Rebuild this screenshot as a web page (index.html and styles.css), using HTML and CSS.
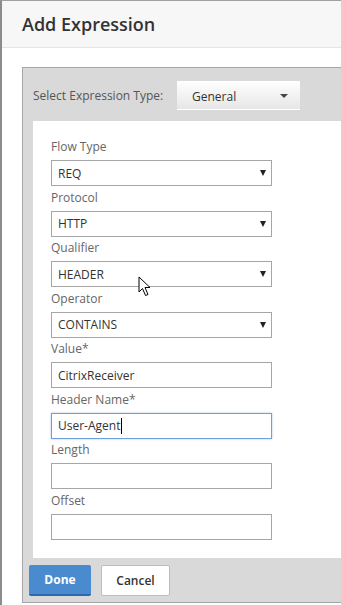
FILE: index.html
```html
<!DOCTYPE html>
<html lang="en">
<head>
    <meta charset="UTF-8">
    <meta name="viewport" content="width=device-width, initial-scale=1.0">
    <title>Add Expression</title>
    <link rel="stylesheet" href="styles.css">
</head>
<body>
    <div class="window">
        <div class="header">
            <p class="title">Add Expression</p>
        </div>

        <div class="content">
            <div class="panel">
                <div class="type-row">
                    <span class="type-label">Select Expression Type:</span>
                    <div class="type-select">
                        <span>General</span>
                        <span class="caret"></span>
                    </div>
                </div>

                <div class="form">
                    <label class="field-label">Flow Type</label>
                    <div class="select"><span>REQ</span><span class="arrow"></span></div>

                    <label class="field-label">Protocol</label>
                    <div class="select"><span>HTTP</span><span class="arrow"></span></div>

                    <label class="field-label">Qualifier</label>
                    <div class="select"><span>HEADER</span><span class="arrow"></span></div>

                    <label class="field-label">Operator</label>
                    <div class="select"><span>CONTAINS</span><span class="arrow"></span></div>

                    <label class="field-label">Value*</label>
                    <div class="input"><span>CitrixReceiver</span></div>

                    <label class="field-label">Header Name*</label>
                    <div class="input focused"><span>User-Agent</span><span class="text-cursor"></span></div>

                    <label class="field-label">Length</label>
                    <div class="input"></div>

                    <label class="field-label">Offset</label>
                    <div class="input"></div>
                </div>

                <div class="footer">
                    <button class="btn btn-done">Done</button>
                    <button class="btn btn-cancel">Cancel</button>
                </div>
            </div>
        </div>

        <!-- mouse pointer over the Qualifier select -->
        <svg class="pointer" width="14" height="22" viewBox="0 0 14 22">
            <path d="M1 1 L1 16 L4.5 12.5 L7.5 19.5 L10 18.5 L7 11.5 L12 11.5 Z" fill="#fff" stroke="#000" stroke-width="1" stroke-linejoin="round"/>
        </svg>
    </div>
</body>
</html>
```

FILE: styles.css
```css
* {
    font-family: "Open Sans", "Noto Sans", sans-serif;
    box-sizing: border-box;
}

body {
    margin: 0;
    height: 605px;
    overflow: hidden;
    background-color: #ffffff;
}

.window {
    position: relative;
    height: 605px;
    border-left: 2px solid #8c8c8c;
    border-top: 1px solid #a0a0a0;
}

.header {
    height: 47px;
    background-color: #f7f7f7;
    border-bottom: 1px solid #e4e4e4;
    padding-left: 20px;
    display: flex;
    align-items: center;
}

.header p.title {
    margin: 0;
    font-size: 18px;
    font-weight: 600;
    color: #333333;
}

.content {
    padding: 19px 0 0 20px;
}

.panel {
    background-color: #d9d9d9;
    border-left: 1px solid #a6a6a6;
    border-top: 1px solid #a6a6a6;
    border-bottom: 1px solid #a6a6a6;
    padding: 13px 0 6px 0;
}

.type-row {
    display: flex;
    align-items: center;
    padding-left: 10px;
}

.type-label {
    width: 144px;
    font-size: 12px;
    color: #555555;
}

.type-select {
    width: 123px;
    height: 29px;
    display: flex;
    align-items: center;
    justify-content: space-between;
    padding: 2px 12px 0 15px;
    background: linear-gradient(#ffffff, #e6e6e6);
    border-bottom: 1px solid #ffffff;
    font-size: 12px;
    color: #333333;
}

.caret {
    width: 0;
    height: 0;
    border-left: 4px solid transparent;
    border-right: 4px solid transparent;
    border-top: 4px solid #444444;
}

.form {
    margin: 11px 0 0 10px;
    background-color: #ffffff;
    padding: 17px 0 16px 18px;
    display: flex;
    flex-direction: column;
}

.field-label {
    display: block;
    height: 18px;
    line-height: 18px;
    margin-bottom: 4px;
    font-size: 12px;
    color: #666666;
}

.select,
.input {
    width: 221px;
    height: 26px;
    margin-bottom: 2.5px;
    border: 1px solid #a6a6a6;
    display: flex;
    align-items: center;
    padding: 0 6px;
    font-size: 12px;
    color: #333333;
}

.select {
    justify-content: space-between;
    padding-right: 5px;
}

.arrow {
    width: 0;
    height: 0;
    border-left: 3.5px solid transparent;
    border-right: 3.5px solid transparent;
    border-top: 6px solid #222222;
}

.input.focused {
    border-color: #6f9fdc;
    box-shadow: 0 0 2px rgba(90, 140, 210, 0.5);
}

.text-cursor {
    width: 1px;
    height: 16px;
    background-color: #000000;
    margin-left: 1px;
}

.footer {
    display: flex;
    gap: 10px;
    padding: 7px 0 0 6px;
}

.btn {
    height: 31px;
    border-radius: 2px;
    font-size: 12px;
    font-weight: 700;
    cursor: pointer;
}

.btn-done {
    width: 62px;
    background-color: #4a8bd0;
    border: none;
    border-bottom: 2px solid #2c68b0;
    color: #ffffff;
}

.btn-cancel {
    width: 69px;
    background-color: #ffffff;
    border: 1px solid #bdbdbd;
    color: #333333;
    font-weight: 600;
}

.pointer {
    position: absolute;
    left: 136px;
    top: 275px;
}
```
